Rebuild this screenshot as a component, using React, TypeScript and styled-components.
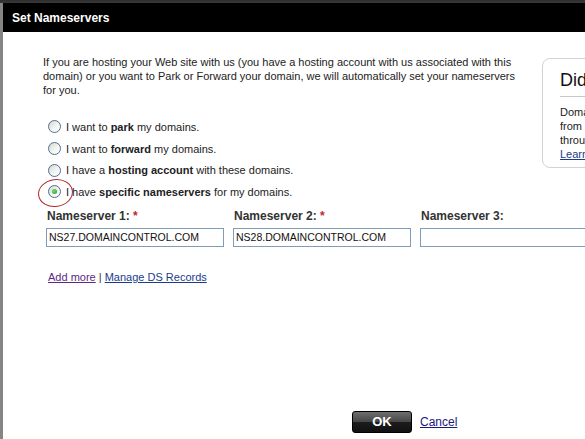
import React from "react";
import styled, { createGlobalStyle, css } from "styled-components";

const GlobalStyle = createGlobalStyle`
  html, body {
    margin: 0;
    padding: 0;
  }
  body {
    font-family: "Liberation Sans", Arial, sans-serif;
    background: #858585;
    overflow: hidden;
  }
`;

const Page = styled.div`
  height: 439px;
  padding: 3px 0 0 3px;
  box-sizing: border-box;
  background: linear-gradient(#2e2e2e 0, #3a3a3a 3px, #858585 3px);
  overflow: hidden;
`;

const Dialog = styled.div`
  width: 660px;
  height: 436px;
  background: #fff;
  display: flex;
  flex-direction: column;
`;

const Header = styled.div`
  height: 29px;
  flex: none;
  background: #000;
  padding-left: 9px;
  display: flex;
  align-items: center;
`;

const Title = styled.h1`
  margin: 0;
  color: #fff;
  font-size: 12px;
  font-weight: bold;
  line-height: 14px;
`;

const Body = styled.div`
  padding: 23px 0 0 40px;
  display: flex;
  flex-direction: column;
`;

const TopSection = styled.div`
  display: flex;
  align-items: flex-start;
`;

const MainColumn = styled.div`
  width: 499px;
  flex: none;
`;

const Intro = styled.p`
  margin: 0;
  width: 480px;
  font-size: 11px;
  line-height: 14px;
  color: #222;
`;

const RadioList = styled.div`
  margin-top: 19px;
  padding-left: 5px;
  display: flex;
  flex-direction: column;
`;

const RadioRow = styled.label`
  position: relative;
  height: 21.7px;
  display: flex;
  align-items: center;
  gap: 5px;
  font-size: 11px;
  color: #222;
  cursor: pointer;
`;

const Radio = styled.span<{ $checked?: boolean }>`
  position: relative;
  flex: none;
  width: 13px;
  height: 13px;
  box-sizing: border-box;
  border-radius: 50%;
  border: 1px solid #4d6f93;
  background: linear-gradient(135deg, #d6d6d0 0%, #f4f4f2 55%, #ffffff 100%);
  ${(p) =>
    p.$checked &&
    css`
      &::after {
        content: "";
        position: absolute;
        left: 3px;
        top: 3px;
        width: 5px;
        height: 5px;
        border-radius: 50%;
        background: radial-gradient(circle at 40% 40%, #6fe06f, #1f9a1f);
      }
    `}
`;

const Highlight = styled.span`
  position: absolute;
  left: -10px;
  top: -2px;
  width: 33px;
  height: 26px;
  border: 1px solid #b3262b;
  border-radius: 50%;
  transform: rotate(-8deg);
  pointer-events: none;
`;

const InfoBox = styled.aside`
  margin-top: 3px;
  width: 120px;
  height: 110px;
  flex: none;
  box-sizing: border-box;
  border: 1px solid #d2d2d2;
  border-radius: 8px;
  padding: 0 0 0 17px;
  white-space: nowrap;
  overflow: hidden;
`;

const InfoTitle = styled.h2`
  margin: 0;
  padding: 10px 0 5px;
  line-height: 22px;
  font-size: 18px;
  font-weight: normal;
  color: #111;
  border-bottom: 1px solid #c8c8c8;
`;

const InfoText = styled.p`
  margin: 8px 0 0;
  font-size: 11px;
  line-height: 14px;
  color: #222;
`;

const InfoLink = styled.a`
  color: #1a3c8c;
  text-decoration: underline;
`;

const FieldRow = styled.div`
  margin-top: 6px;
  padding-left: 3px;
  display: flex;
  gap: 9px;
`;

const Field = styled.div`
  display: flex;
  flex-direction: column;
  gap: 5px;
`;

const FieldLabel = styled.span`
  font-size: 12px;
  font-weight: bold;
  line-height: 14px;
  color: #333;
  padding-left: 1px;
`;

const Required = styled.span`
  color: #c1272d;
`;

const TextInput = styled.input`
  width: 178px;
  height: 19px;
  box-sizing: border-box;
  border: 1px solid #7f9db9;
  padding: 0 2px;
  font-family: "Liberation Sans", Arial, sans-serif;
  font-size: 10.5px;
  color: #111;
  outline: none;
`;

const Links = styled.div`
  margin-top: 23px;
  padding-left: 5px;
  font-size: 11px;
  line-height: 14px;
  color: #333;
`;

const Link = styled.a<{ $visited?: boolean }>`
  color: ${(p) => (p.$visited ? "#5b2a86" : "#1a3c8c")};
  text-decoration: underline;
  cursor: pointer;
`;

const Footer = styled.div`
  margin-top: 127px;
  padding-left: 309px;
  display: flex;
  align-items: center;
  gap: 8px;
`;

const OkButton = styled.button`
  width: 60px;
  height: 22px;
  border: 1px solid #000;
  border-radius: 3px;
  background: linear-gradient(
    #6e6e6e 0%,
    #474747 48%,
    #1c1c1c 52%,
    #111 100%
  );
  color: #fff;
  font-family: "Liberation Sans", Arial, sans-serif;
  font-size: 13px;
  font-weight: bold;
  padding: 0;
  cursor: pointer;
`;

const CancelLink = styled.a`
  font-size: 12px;
  color: #1a1a7a;
  text-decoration: underline;
  cursor: pointer;
`;

const options = [
  { pre: "I want to ", bold: "park", post: " my domains." },
  { pre: "I want to ", bold: "forward", post: " my domains." },
  { pre: "I have a ", bold: "hosting account", post: " with these domains." },
  { pre: "I have ", bold: "specific nameservers", post: " for my domains." },
];

const nameservers = [
  { label: "Nameserver 1:", required: true, value: "NS27.DOMAINCONTROL.COM" },
  { label: "Nameserver 2:", required: true, value: "NS28.DOMAINCONTROL.COM" },
  { label: "Nameserver 3:", required: false, value: "" },
];

export default function App() {
  const selected = 3;
  return (
    <>
      <GlobalStyle />
      <Page>
        <Dialog>
          <Header>
            <Title>Set Nameservers</Title>
          </Header>
          <Body>
            <TopSection>
              <MainColumn>
                <Intro>
                  If you are hosting your Web site with us (you have a hosting
                  account with us associated with this domain) or you want to
                  Park or Forward your domain, we will automatically set your
                  nameservers for you.
                </Intro>
                <RadioList>
                  {options.map((o, i) => (
                    <RadioRow key={o.bold}>
                      <Radio $checked={i === selected} />
                      <span>
                        {o.pre}
                        <b>{o.bold}</b>
                        {o.post}
                      </span>
                      {i === selected && <Highlight />}
                    </RadioRow>
                  ))}
                </RadioList>
              </MainColumn>
              <InfoBox>
                <InfoTitle>Did you know?</InfoTitle>
                <InfoText>
                  Domains you transfer
                  <br />
                  from other registrars
                  <br />
                  through us get a free year.
                  <br />
                  <InfoLink>Learn more</InfoLink>
                </InfoText>
              </InfoBox>
            </TopSection>
            <FieldRow>
              {nameservers.map((n) => (
                <Field key={n.label}>
                  <FieldLabel>
                    {n.label} {n.required && <Required>*</Required>}
                  </FieldLabel>
                  <TextInput defaultValue={n.value} />
                </Field>
              ))}
            </FieldRow>
            <Links>
              <Link $visited>Add more</Link>
              {"  | "}
              <Link>Manage DS Records</Link>
            </Links>
            <Footer>
              <OkButton>OK</OkButton>
              <CancelLink>Cancel</CancelLink>
            </Footer>
          </Body>
        </Dialog>
      </Page>
    </>
  );
}
